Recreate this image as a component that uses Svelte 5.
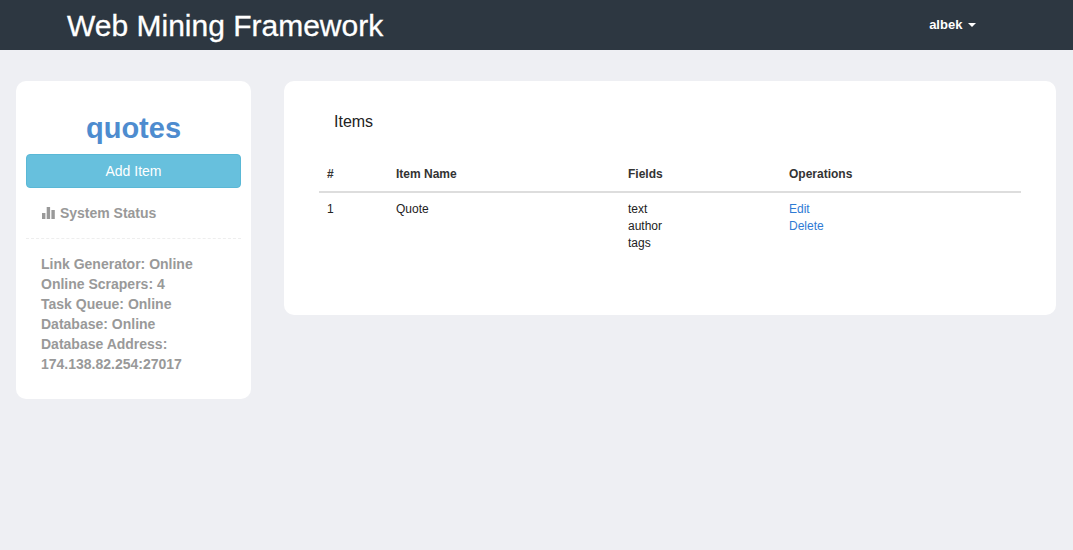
<script>
  let stats = [
    "Link Generator: Online",
    "Online Scrapers: 4",
    "Task Queue: Online",
    "Database: Online",
    "Database Address: 174.138.82.254:27017"
  ];
  let items = [{ id: 1, name: "Quote", fields: ["text", "author", "tags"] }];
</script>

<nav class="navbar">
  <a class="brand" href="#top">Web Mining Framework</a>
  <a class="user" href="#top">albek <span class="caret"></span></a>
</nav>

<div class="page">
  <aside class="card sidebar">
    <h2 class="project">quotes</h2>
    <button class="add">Add Item</button>
    <h4 class="status">
      <svg width="13" height="13" viewBox="0 0 13 13" fill="currentColor">
        <rect x="0" y="7" width="3.4" height="6" />
        <rect x="4.7" y="1" width="3.4" height="12" />
        <rect x="9.4" y="4" width="3.4" height="9" />
      </svg>
      System Status
    </h4>
    <div class="stats">
      {#each stats as line}
        <div>{line}</div>
      {/each}
    </div>
  </aside>

  <main class="card content">
    <h4 class="heading">Items</h4>
    <table>
      <thead>
        <tr>
          <th class="c1">#</th>
          <th class="c2">Item Name</th>
          <th class="c3">Fields</th>
          <th>Operations</th>
        </tr>
      </thead>
      <tbody>
        {#each items as item (item.id)}
          <tr>
            <td>{item.id}</td>
            <td>{item.name}</td>
            <td>
              {#each item.fields as f}
                <div>{f}</div>
              {/each}
            </td>
            <td>
              <div><a href="#top">Edit</a></div>
              <div><a href="#top">Delete</a></div>
            </td>
          </tr>
        {/each}
      </tbody>
    </table>
  </main>
</div>

<style>
  :global(body) {
    margin: 0;
    background: #eeeff3;
    font-family: "Liberation Sans", Arial, sans-serif;
    color: #222;
  }
  .navbar {
    height: 50px;
    background: #2d3741;
    display: flex;
    align-items: center;
    justify-content: space-between;
    padding: 0 97px 0 67px;
  }
  .brand {
    color: #fff;
    font-size: 30px;
    text-decoration: none;
    margin-top: 2px;
    -webkit-text-stroke: 0.3px #fff;
  }
  .user {
    color: #fff;
    font-size: 13px;
    font-weight: bold;
    text-decoration: none;
    margin-bottom: 2px;
  }
  .caret {
    display: inline-block;
    width: 0;
    height: 0;
    margin-left: 2px;
    vertical-align: middle;
    border-top: 4px solid #fff;
    border-left: 4px solid transparent;
    border-right: 4px solid transparent;
  }
  .page {
    display: flex;
    align-items: flex-start;
    gap: 33px;
    padding: 31px 17px 0 16px;
  }
  .card {
    background: #fff;
    border-radius: 10px;
    box-sizing: border-box;
  }
  .sidebar {
    width: 235px;
    height: 318px;
    padding: 29px 10px 0;
  }
  .project {
    margin: 0;
    text-align: center;
    color: #4e8ccf;
    font-size: 29px;
    line-height: 37px;
    font-weight: bold;
  }
  .add {
    display: block;
    width: 100%;
    height: 34px;
    margin-top: 7px;
    background: #67c0dd;
    border: 1px solid #5ab8d6;
    border-radius: 4px;
    color: #fff;
    font-family: inherit;
    font-size: 14px;
  }
  .status {
    margin: 0;
    padding: 16px 16px 16px;
    color: #999;
    font-size: 14px;
    line-height: 18px;
    font-weight: bold;
    border-bottom: 1px dashed #eee;
  }
  .status svg {
    vertical-align: -1px;
    margin-right: 1px;
  }
  .stats {
    padding: 15px 15px 0;
    color: #999;
    font-size: 14px;
    line-height: 20px;
    font-weight: bold;
  }
  .content {
    flex: 1;
    height: 234px;
    padding: 0 35px;
  }
  .heading {
    margin: 0;
    padding: 32px 15px 0;
    font-size: 16px;
    line-height: 18px;
    font-weight: normal;
    color: #222;
  }
  table {
    width: 100%;
    margin-top: 27px;
    border-collapse: collapse;
    font-size: 12px;
    line-height: 17px;
    table-layout: fixed;
  }
  th {
    text-align: left;
    padding: 8px;
    border-bottom: 2px solid #ddd;
    color: #333;
  }
  td {
    padding: 8px;
    vertical-align: top;
    color: #222;
  }
  .c1 { width: 53px; }
  .c2 { width: 216px; }
  .c3 { width: 145px; }
  a { color: #337ab7; }
  td a {
    color: #2f7bd4;
    text-decoration: none;
  }
</style>
